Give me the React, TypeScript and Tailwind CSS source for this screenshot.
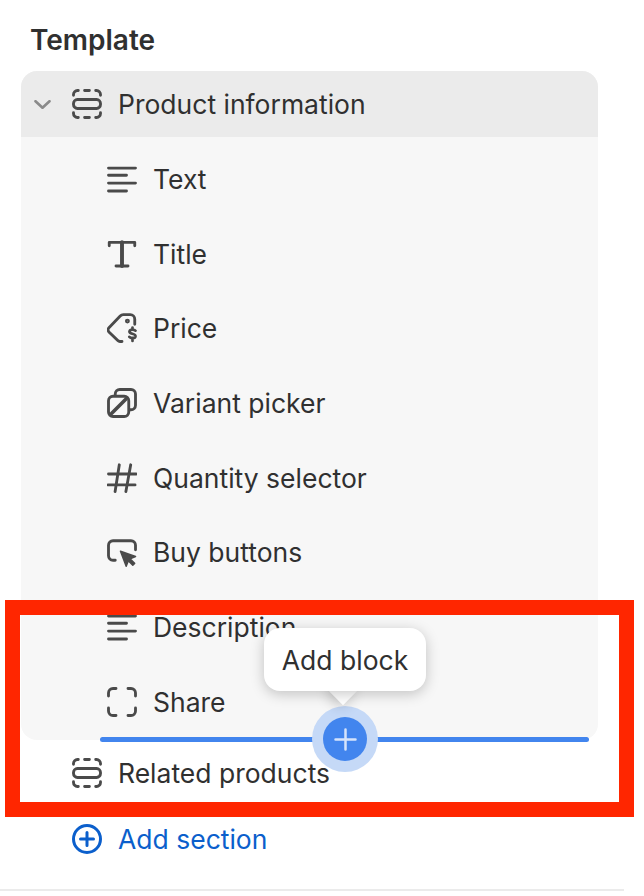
import type { ReactNode } from 'react'

function Icon({ children, className = 'text-[#4a4a4a]' }: { children: ReactNode; className?: string }) {
  return (
    <svg
      viewBox="0 0 20 20"
      fill="none"
      stroke="currentColor"
      strokeWidth={1.9}
      strokeLinecap="round"
      strokeLinejoin="round"
      className={`w-[30px] h-[30px] shrink-0 ${className}`}
    >
      {children}
    </svg>
  )
}

const SectionIcon = () => (
  <Icon>
    <path d="M1 4.2V3.6A2.6 2.6 0 0 1 3.6 1h.6M8.4 1h3.2M15.8 1h.6A2.6 2.6 0 0 1 19 3.6v.6" />
    <rect x="1" y="7" width="18" height="6" rx="2.6" />
    <path d="M1 15.8v.6A2.6 2.6 0 0 0 3.6 19h.6M8.4 19h3.2M15.8 19h.6a2.6 2.6 0 0 0 2.6-2.6v-.6" />
  </Icon>
)

const TextIcon = () => (
  <Icon>
    <path d="M1 2.7h18M1 7.5h12M1 12.7h18M1 18h12" />
  </Icon>
)

const TitleIcon = () => (
  <Icon>
    <path d="M1.5 4.5V2.2h17v2.3" />
    <path d="M10 2.2V18" strokeWidth={2.6} />
    <path d="M6 18h8" />
  </Icon>
)

const PriceIcon = () => (
  <Icon>
    <path d="M10 19H8.6a2 2 0 0 1-1.4-.6L1.3 12.6a2 2 0 0 1 0-2.8L8.8 2a3 3 0 0 1 2.1-.9h4.6a3 3 0 0 1 3 3v3.4" />
    <circle cx="13.6" cy="5.4" r="0.7" />
    <path d="M19 11.8c-.6-.9-3.6-1.2-4 .4-.5 1.9 4.2 1.3 4 3.3-.2 1.6-3.2 1.5-4.1.4M17 9.7v1M17 16.6v2" strokeWidth={1.8} />
  </Icon>
)

const VariantIcon = () => (
  <Icon>
    <rect x="1" y="5.5" width="13.5" height="13.5" rx="3" />
    <path d="M5.5 4.5V4a3 3 0 0 1 3-3H16a3 3 0 0 1 3 3v7.5a3 3 0 0 1-3 3h-1" />
    <path d="M3 17 12.5 7.5" strokeWidth={2.4} />
  </Icon>
)

const HashIcon = () => (
  <Icon>
    <path d="M1 7.3h18.5M.7 14.6h18M8.2 1.2 5.4 19M15.8 1.2 12.6 19" />
  </Icon>
)

const BuyIcon = () => (
  <Icon>
    <path d="M5.5 15.5H4A3 3 0 0 1 1 12.5V5.5a3 3 0 0 1 3-3h12a3 3 0 0 1 3 3v3" />
    <path d="M9 9.5 19 13l-3.6 1.6 3 3-1.2 1.2-3-3L12.8 19.5Z" fill="currentColor" strokeWidth={1} />
  </Icon>
)

const ShareIcon = () => (
  <Icon>
    <path d="M1 6V4a3 3 0 0 1 3-3h2M14 1h2a3 3 0 0 1 3 3v2M19 14v2a3 3 0 0 1-3 3h-2M6 19H4a3 3 0 0 1-3-3v-2" />
  </Icon>
)

const blocks = [
  { label: 'Text', icon: <TextIcon /> },
  { label: 'Title', icon: <TitleIcon /> },
  { label: 'Price', icon: <PriceIcon /> },
  { label: 'Variant picker', icon: <VariantIcon /> },
  { label: 'Quantity selector', icon: <HashIcon /> },
  { label: 'Buy buttons', icon: <BuyIcon /> },
  { label: 'Description', icon: <TextIcon /> },
  { label: 'Share', icon: <ShareIcon /> },
]

export default function App() {
  return (
    <div className="relative w-[644px] h-[896px] overflow-hidden bg-white font-['Inter',sans-serif] text-[26.5px] leading-[34px] text-[#303030]">
      <h1 className="pt-[23px] pl-[30px] mb-[14px] text-[28px] font-semibold">Template</h1>

      <div className="ml-[21px] w-[577px]">
        {/* open section */}
        <div className="rounded-[16px] overflow-hidden bg-[#f7f7f7]">
          <div className="h-[66px] flex items-center pl-[13px] bg-[#ebebeb]">
            <svg viewBox="0 0 17 9" fill="none" stroke="#8a8a8a" strokeWidth={2.6} strokeLinecap="round" strokeLinejoin="round" className="w-[17px] h-[9px] mr-[21px]">
              <path d="M1.5 1.2 8.5 7.8 15.5 1.2" />
            </svg>
            <SectionIcon />
            <span className="ml-[16px]">Product information</span>
          </div>
          <div className="pt-[4.6px] pb-[1px]">
            {blocks.map((b) => (
              <div key={b.label} className="h-[74.7px] flex items-center gap-[16px] pl-[86px]">
                {b.icon}
                <span>{b.label}</span>
              </div>
            ))}
          </div>
        </div>

        <div className="h-[66px] flex items-center gap-[16px] pl-[51px]">
          <SectionIcon />
          <span>Related products</span>
        </div>
        <div className="h-[66px] flex items-center gap-[16px] pl-[51px] text-[#0b5fcc]">
          <svg viewBox="0 0 30 30" fill="none" stroke="currentColor" strokeWidth={3} strokeLinecap="round" className="w-[30px] h-[30px] shrink-0">
            <circle cx="15" cy="15" r="13.5" />
            <path d="M15 8.5v13M8.5 15h13" />
          </svg>
          <span>Add section</span>
        </div>
      </div>

      <div className="mt-[17px] w-[624px] h-[2px] bg-[#ebebeb]" />

      {/* insert line with add block button */}
      <div className="absolute left-[100px] top-[737px] w-[489px] h-[5px] rounded-full bg-[#4285ee]" />
      <div className="absolute left-[312px] top-[706px] w-[66px] h-[66px] rounded-full bg-[#c5d9f7] flex items-center justify-center">
        <div className="w-[44px] h-[44px] rounded-full bg-[#4285ee] flex items-center justify-center">
          <svg viewBox="0 0 23 23" fill="none" stroke="#d6e4fb" strokeWidth={2.5} strokeLinecap="round" className="w-[23px] h-[23px]">
            <path d="M11.5 1.5v20M1.5 11.5h20" />
          </svg>
        </div>
      </div>

      {/* tooltip */}
      <div className="absolute left-[333px] top-[681px] w-[20px] h-[20px] rotate-45 bg-white shadow-[0_3px_14px_rgba(0,0,0,0.22)]" />
      <div className="absolute left-[264px] top-[628px] w-[162px] h-[63px] rounded-[16px] bg-white flex items-center justify-center shadow-[0_3px_14px_rgba(0,0,0,0.22)]">
        <span>Add block</span>
      </div>

      {/* annotation frame */}
      <div className="absolute left-[5px] top-[600px] w-[629px] h-[217px] border-[15px] border-[#ff2600]" />
    </div>
  )
}
